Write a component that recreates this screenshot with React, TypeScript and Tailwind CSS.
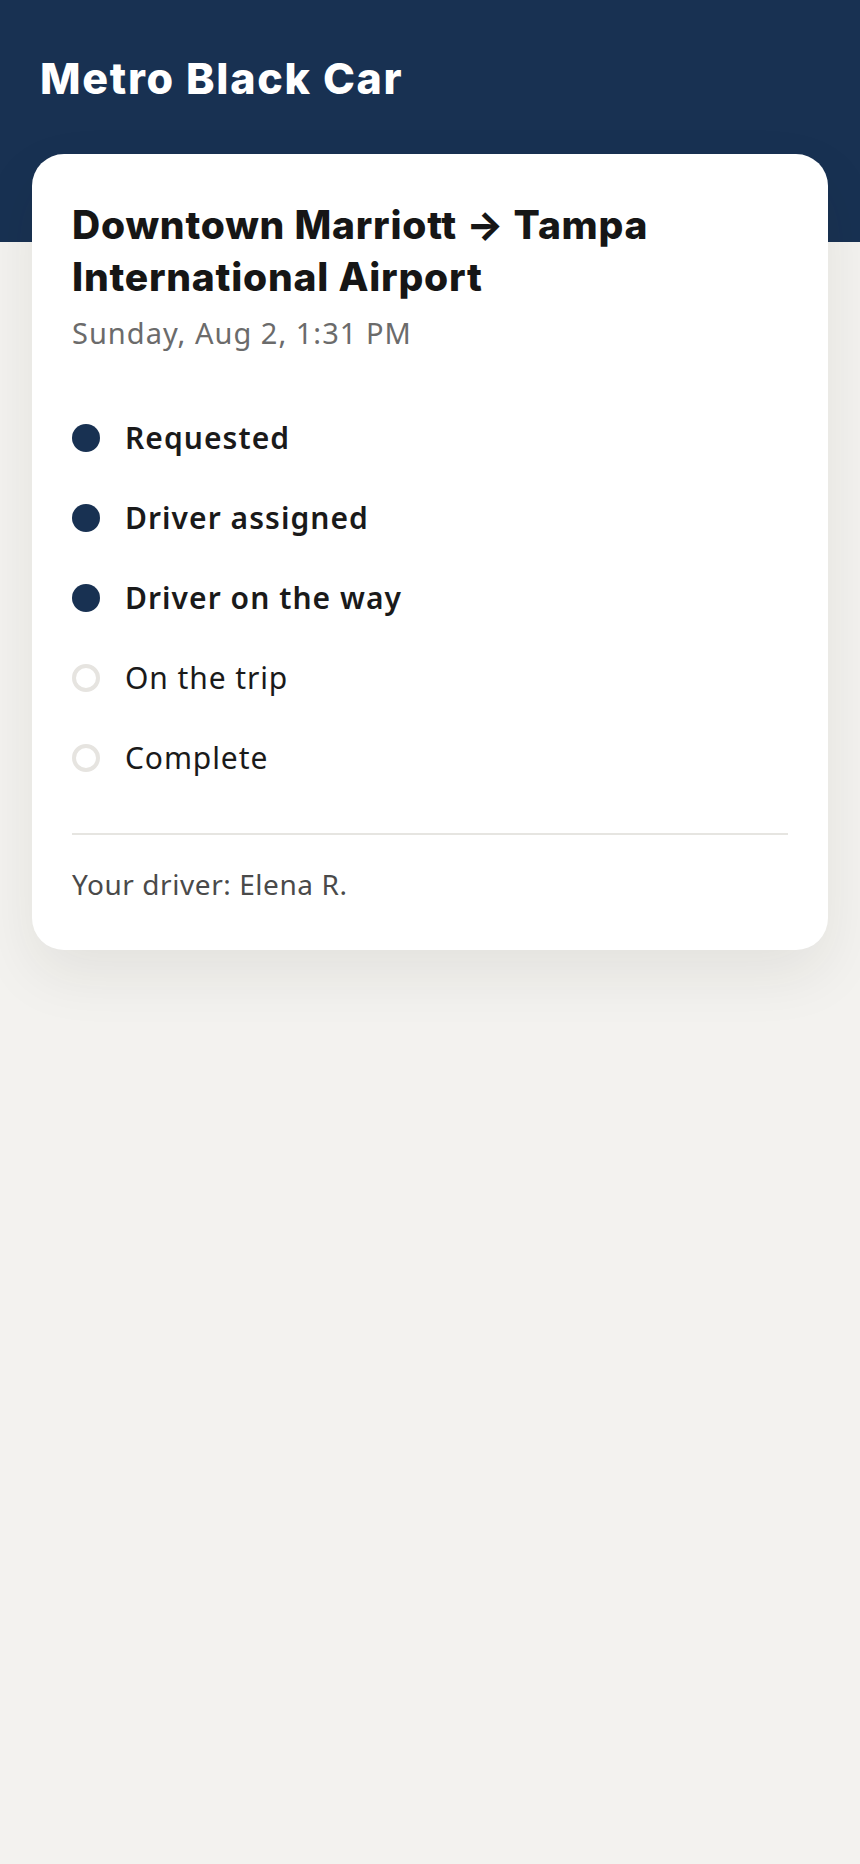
import React from "react";

const steps = [
  { label: "Requested", done: true },
  { label: "Driver assigned", done: true },
  { label: "Driver on the way", done: true },
  { label: "On the trip", done: false },
  { label: "Complete", done: false },
];

export default function App() {
  return (
    <div className="min-h-[1864px] bg-[#f3f2ef] font-['Noto_Sans',sans-serif]">
      <header className="h-[242px] bg-[#183152] px-[40px] pt-[52px]">
        <h1 className="font-['Inter',sans-serif] text-[43px] leading-[52px] font-extrabold tracking-[0.04em] text-white">
          Metro Black Car
        </h1>
      </header>
      <main className="-mt-[88px] px-[32px]">
        <section className="rounded-[32px] bg-white px-[40px] pt-[45px] pb-[49px] shadow-[0_24px_60px_rgba(40,35,20,0.08)]">
          <h2 className="font-['Inter',sans-serif] text-[39px] leading-[52px] font-extrabold tracking-[0.02em] text-[#161616]">
            Downtown Marriott → Tampa International Airport
          </h2>
          <p className="mt-[12px] text-[29px] leading-[36px] text-[#6b6b6b] tracking-[0.035em]">
            Sunday, Aug 2, 1:31 PM
          </p>
          <ul className="mt-[47px] flex flex-col">
            {steps.map((s) => (
              <li key={s.label} className="flex h-[80px] items-center gap-[25px]">
                {s.done ? (
                  <span className="h-[28px] w-[28px] shrink-0 rounded-full bg-[#183152]" />
                ) : (
                  <span className="h-[28px] w-[28px] shrink-0 rounded-full border-[4px] border-[#e6e4e0] bg-white" />
                )}
                <span
                  className={
                    s.done
                      ? "text-[30px] leading-[36px] font-semibold text-[#1a1a1a] tracking-[0.035em]"
                      : "text-[30px] leading-[36px] font-normal text-[#1a1a1a] tracking-[0.03em]"
                  }
                >
                  {s.label}
                </span>
              </li>
            ))}
          </ul>
          <div className="mt-[35px] h-[2px] bg-[#e6e5e1]" />
          <p className="mt-[32px] text-[28px] leading-[34px] text-[#4a4a4a] tracking-[0.02em]">
            Your driver: Elena R.
          </p>
        </section>
      </main>
    </div>
  );
}
